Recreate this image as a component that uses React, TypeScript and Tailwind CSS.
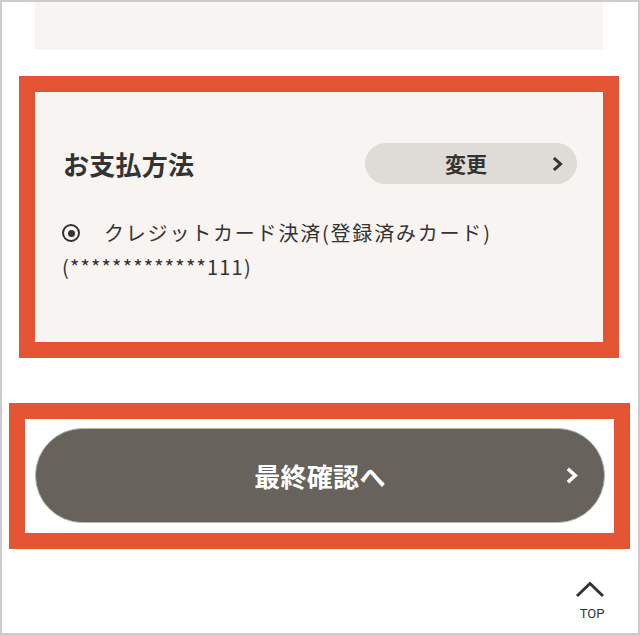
import React from 'react'

const JP = "font-['Noto_Sans_CJK_JP','Noto_Sans',sans-serif]"

function Chevron({ className, stroke = '#333', sw = 3 }: { className?: string; stroke?: string; sw?: number }) {
  return (
    <svg viewBox="0 0 10 14" className={className} fill="none">
      <polyline points="2,2 7.5,7 2,12" stroke={stroke} strokeWidth={sw} strokeLinecap="square" strokeLinejoin="miter" />
    </svg>
  )
}

export default function App() {
  return (
    <div className={`w-[640px] h-[635px] border-2 border-[#cccccc] bg-white overflow-hidden flex flex-col text-[#333] ${JP}`}>
      {/* previous section (cut off) */}
      <div className="ml-[33px] w-[568px] h-[48px] shrink-0 bg-[#f7f4f1]" />

      {/* payment method */}
      <div className="ml-[17px] mt-[26px] w-[600px] shrink-0 border-[16px] border-[#e45432]">
        <div className="bg-[#f7f4f1] h-[250px] pt-[51px] pl-[28px] pr-[26px]">
          <div className="flex items-center justify-between">
            <h2 className="text-[26px] font-bold leading-none tracking-[0.01em]">お支払方法</h2>
            <button className="w-[212px] h-[41px] rounded-full bg-[#dfdbd6] grid grid-cols-[1fr_auto_1fr] items-center pl-1 pr-[14px]">
              <span />
              <span className="text-[21px] font-bold leading-none">変更</span>
              <Chevron className="w-[10px] h-[14px] justify-self-end" />
            </button>
          </div>

          <div className="mt-[32px] text-[20px] leading-[34px] tracking-[0.09em]">
            <div className="flex items-center">
              <span className="w-[18px] h-[18px] -ml-[1px] rounded-full border-[2.5px] border-[#333] flex items-center justify-center mr-[24px] shrink-0">
                <span className="w-[7px] h-[7px] rounded-full bg-[#333]" />
              </span>
              <span>クレジットカード決済(登録済みカード)</span>
            </div>
            <div className="-ml-[1px] tracking-[0.06em]">(*************111)</div>
          </div>
        </div>
      </div>

      {/* final confirm */}
      <div className="ml-[7px] mt-[45px] w-[621px] h-[146px] shrink-0 border-[16px] border-[#e45432] bg-white pl-[10px] pt-[9px]">
        <button className="w-[570px] h-[95px] rounded-full bg-[#67625c] border border-[#b9b3ac] grid grid-cols-[1fr_auto_1fr] items-center px-[26px]">
          <span />
          <span className="text-[26px] font-bold text-white leading-none tracking-[0.01em]">最終確認へ</span>
          <Chevron className="w-[11px] h-[17px] justify-self-end" stroke="#fff" sw={3.2} />
        </button>
      </div>

      {/* back to top */}
      <div className="self-end mr-[28px] mt-[32px] w-[40px] flex flex-col items-center">
        <svg width="30" height="17" viewBox="0 0 30 17" fill="none">
          <polyline points="2,15 15,2.5 28,15" stroke="#333" strokeWidth="3" />
        </svg>
        <span className="mt-[9px] text-[13px] leading-none font-['Roboto','Liberation_Sans',sans-serif] text-[#333] ml-[4px]">TOP</span>
      </div>
    </div>
  )
}
